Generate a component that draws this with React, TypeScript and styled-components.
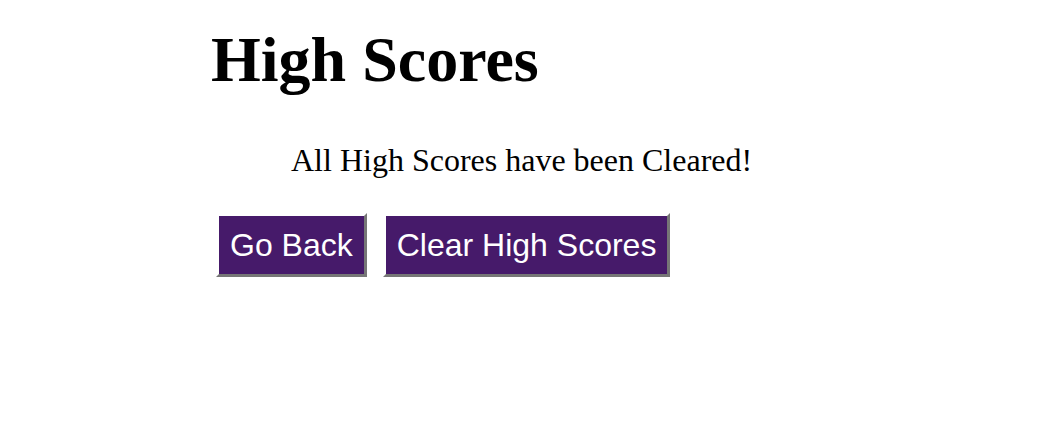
import React from "react";
import styled, { createGlobalStyle } from "styled-components";

const Global = createGlobalStyle`
  html, body { margin: 0; padding: 0; background: #fff; }
  body { font-family: "Liberation Serif", "Times New Roman", serif; color: #000; }
`;

const Page = styled.main`
  display: flex;
  flex-direction: column;
  align-items: flex-start;
  padding: 24px 0 0 211px;
`;

const Title = styled.h1`
  margin: 0;
  font-size: 64px;
  line-height: 72px;
  font-weight: bold;
`;

const Message = styled.p`
  margin: 46px 0 0 80px;
  font-size: 32px;
  line-height: 36px;
`;

const Actions = styled.div`
  display: flex;
  gap: 16px;
  margin: 35px 0 0 5px;
`;

const Button = styled.button`
  font-family: "Liberation Sans", Arial, Helvetica, sans-serif;
  font-size: 32px;
  line-height: 36px;
  color: #fff;
  background: #461a6a;
  padding: 11px 11px 11px;
  border-style: solid;
  border-width: 3px;
  border-color: #fff #767676 #767676 #fff;
  cursor: pointer;
`;

export default function App() {
  return (
    <>
      <Global />
      <Page>
        <Title>High Scores</Title>
        <Message>All High Scores have been Cleared!</Message>
        <Actions>
          <Button>Go Back</Button>
          <Button>Clear High Scores</Button>
        </Actions>
      </Page>
    </>
  );
}
